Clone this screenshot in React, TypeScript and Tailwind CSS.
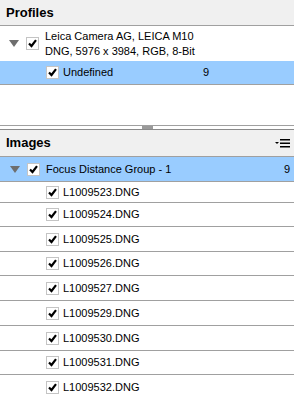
import { FC } from 'react';

const Triangle: FC = () => (
  <svg width="10" height="7" viewBox="0 0 10 7" className="shrink-0">
    <polygon points="0,0 10,0 5,7" fill="#6e6e6e" />
  </svg>
);

const Check: FC = () => (
  <div className="w-[13px] h-[13px] shrink-0 border border-[#c4c4c4] bg-white flex items-center justify-center">
    <svg width="9" height="9" viewBox="0 0 9 9">
      <path d="M1 4.5 L3.5 7 L8 1.2" stroke="#000" strokeWidth="2.2" fill="none" />
    </svg>
  </div>
);

// row heights match the uneven spacing in the list
const files = [
  { name: 'L1009524.DNG', h: 'h-[24px]' },
  { name: 'L1009525.DNG', h: 'h-[25px]' },
  { name: 'L1009526.DNG', h: 'h-[24px]' },
  { name: 'L1009527.DNG', h: 'h-[25px]' },
  { name: 'L1009529.DNG', h: 'h-[25px]' },
  { name: 'L1009530.DNG', h: 'h-[25px]' },
  { name: 'L1009531.DNG', h: 'h-[24px]' },
  { name: 'L1009532.DNG', h: 'h-[25px]' },
];

const App: FC = () => {
  return (
    <div className="w-[294px] h-[398px] overflow-hidden bg-white text-[11px] text-black font-['Liberation_Sans',Arial,sans-serif]">
      {/* Profiles */}
      <div className="h-[26px] bg-[#f0f0f0] border-b border-[#a0a0a0] flex items-center pl-[6px]">
        <span className="font-bold text-[13px]">Profiles</span>
      </div>
      <div className="h-[35px] flex items-center">
        <div className="pl-[9px] w-[26px]"><Triangle /></div>
        <Check />
        <div className="ml-[6px] leading-[15px]">
          <div>Leica Camera AG, LEICA M10</div>
          <div>DNG, 5976 x 3984, RGB, 8-Bit</div>
        </div>
      </div>
      <div className="h-[24px] bg-[#99ccff] border-b border-[#a0a0a0] flex items-center">
        <div className="pl-[46px]"><Check /></div>
        <span className="ml-[4px] w-[140px]">Undefined</span>
        <span>9</span>
      </div>
      <div className="h-[40px]" />

      {/* splitter */}
      <div className="relative h-[5px] flex flex-col">
        <div className="h-[1px] bg-[#a0a0a0]" />
        <div className="h-[3px] bg-white" />
        <div className="h-[1px] bg-[#8a8a8a]" />
        <div className="absolute left-[142px] top-[1px] w-[11px] h-[3px] bg-[#9a9a9a]" />
      </div>

      {/* Images */}
      <div className="h-[27px] bg-[#f0f0f0] border-b border-[#a0a0a0] flex items-center pl-[6px] pr-[4px]">
        <span className="font-bold text-[13px] flex-1">Images</span>
        <svg width="15" height="9" viewBox="0 0 15 9">
          <polygon points="0,3 4,3 2,5" fill="#000" />
          <rect x="5" y="0" width="10" height="1.5" fill="#000" />
          <rect x="5" y="3.5" width="10" height="1.5" fill="#000" />
          <rect x="5" y="7" width="10" height="1.5" fill="#000" />
        </svg>
      </div>
      <div className="h-[25px] bg-[#99ccff] border-b border-[#a0a0a0] flex items-center">
        <div className="pl-[10px] w-[27px]"><Triangle /></div>
        <Check />
        <span className="ml-[6px] flex-1">Focus Distance Group - 1</span>
        <span className="pr-[4px]">9</span>
      </div>
      <div className="h-[21px] border-b border-[#a0a0a0] flex items-center">
        <div className="pl-[46px]"><Check /></div>
        <span className="ml-[4px]">L1009523.DNG</span>
      </div>
      {files.map(f => (
        <div key={f.name} className={`${f.h} border-b border-[#a0a0a0] flex items-center`}>
          <div className="pl-[46px]"><Check /></div>
          <span className="ml-[4px]">{f.name}</span>
        </div>
      ))}
    </div>
  );
};

export default App;
